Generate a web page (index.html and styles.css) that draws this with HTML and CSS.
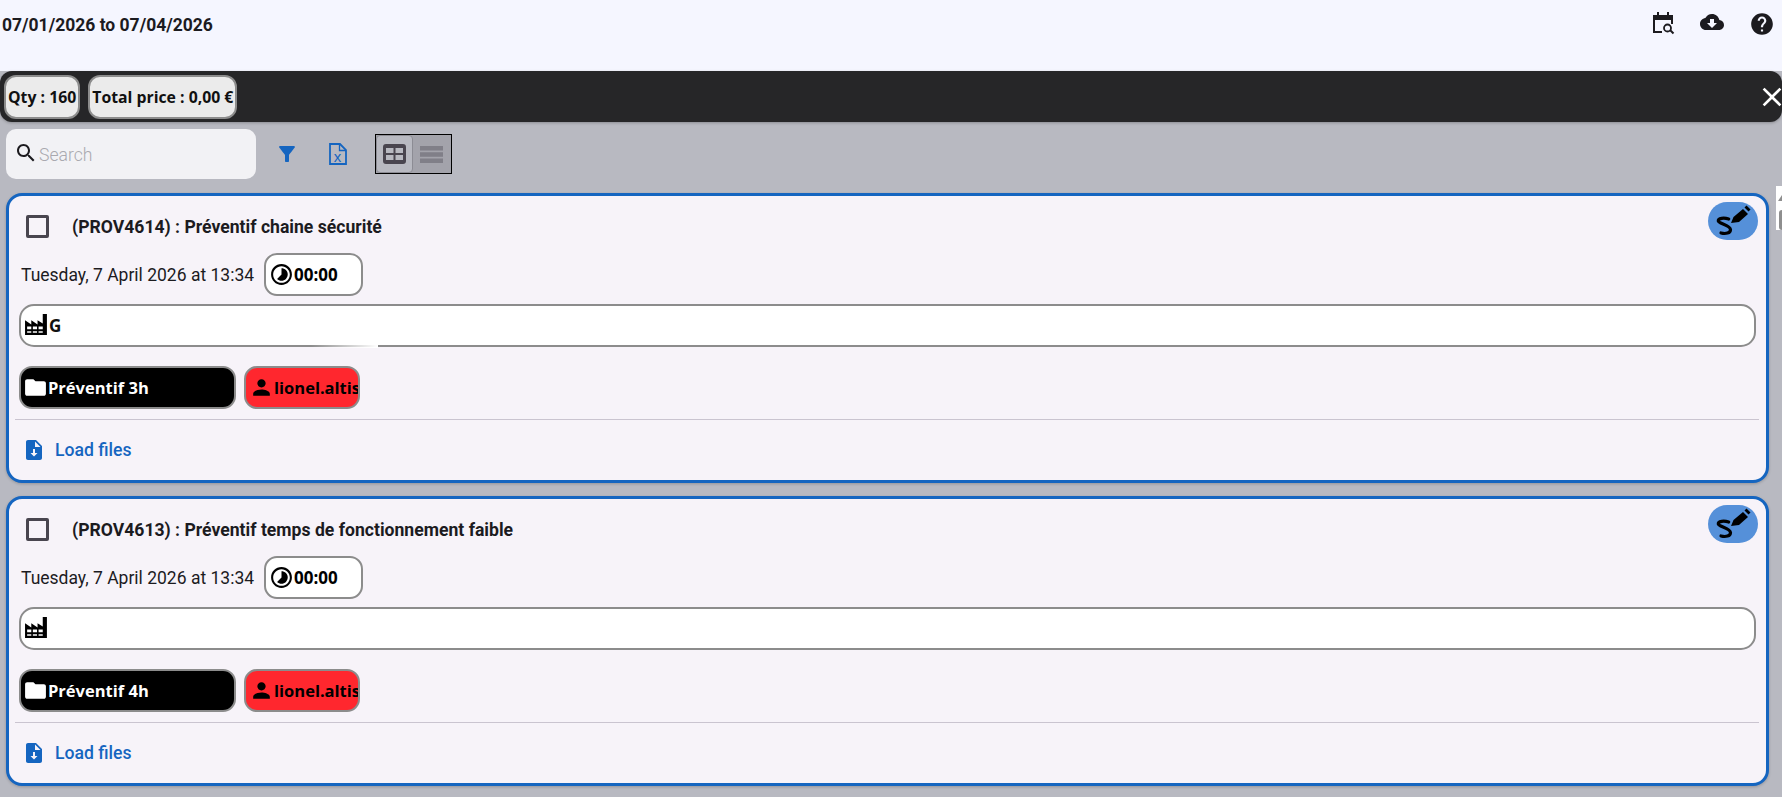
FILE: index.html
```html
<!DOCTYPE html>
<html>
    <head>
        <meta charset="UTF-8">
        <meta name="viewport" content="width=device-width, initial-scale=1.0">
        <title>Interventions</title>
        <link rel="stylesheet" href="styles.css">
    </head>
    <body>
        <svg class="sprite" width="0" height="0">
            <symbol id="i-search" viewBox="0 0 24 24"><path d="M15.5 14h-.79l-.28-.27C15.41 12.59 16 11.11 16 9.5 16 5.91 13.09 3 9.5 3S3 5.91 3 9.5 5.91 16 9.5 16c1.61 0 3.09-.59 4.23-1.57l.27.28v.79l5 4.99L20.49 19l-4.99-5zm-6 0C7.01 14 5 11.99 5 9.5S7.01 5 9.5 5 14 7.01 14 9.5 11.99 14 9.5 14z"/></symbol>
            <symbol id="i-filter" viewBox="0 0 24 24"><path d="M4.25 5.61C6.27 8.2 10 13 10 13v6c0 .55.45 1 1 1h2c.55 0 1-.45 1-1v-6s3.72-4.8 5.74-7.39c.51-.66.04-1.61-.79-1.61H5.04c-.83 0-1.3.95-.79 1.61z"/></symbol>
            <symbol id="i-folder" viewBox="0 0 24 24"><path d="M10 4H4c-1.1 0-1.99.9-1.99 2L2 18c0 1.1.9 2 2 2h16c1.1 0 2-.9 2-2V8c0-1.1-.9-2-2-2h-8l-2-2z"/></symbol>
            <symbol id="i-person" viewBox="0 0 24 24"><path d="M12 12c2.21 0 4-1.79 4-4s-1.79-4-4-4-4 1.79-4 4 1.79 4 4 4zm0 2c-2.67 0-8 1.34-8 4v2h16v-2c0-2.66-5.33-4-8-4z"/></symbol>
            <symbol id="i-timelapse" viewBox="0 0 24 24"><path d="M16.24 7.76C15.07 6.59 13.54 6 12 6v6l-4.24 4.24c2.34 2.34 6.14 2.34 8.49 0 2.34-2.34 2.34-6.14-.01-8.48zM12 2C6.48 2 2 6.48 2 12s4.48 10 10 10 10-4.48 10-10S17.52 2 12 2zm0 18c-4.42 0-8-3.58-8-8s3.58-8 8-8 8 3.58 8 8-3.58 8-8 8z"/></symbol>
            <symbol id="i-factory" viewBox="0 0 24 24"><path fill-rule="evenodd" d="M1 22V8l6 4V8l6 4V8l5 3V2h4v20zM3 14v2.500h4V14zm5.500 0v2.500h4V14zm5.500 0v2.500h4V14zM3 18.500V20h4v-1.500zm5.500 0V20h4v-1.500zm5.500 0V20h4v-1.500z"/></symbol>
            <symbol id="i-file-down" viewBox="0 0 24 24"><path d="M14 2H6c-1.1 0-1.99.9-1.99 2L4 20c0 1.1.89 2 1.99 2H18c1.1 0 2-.9 2-2V8l-6-6zm-1 7V3.500L18.500 9H13zm-2 2h2v4h2.500L12 18.500 8.500 15H11z"/></symbol>
            <symbol id="i-sign" viewBox="0 0 50 38"><path d="M23 21l2.500-6 9.500-8 5 5-9 8z"/><path d="M36.500 5.500l2-2 4 4-2 2z"/><path fill="none" stroke="#000" stroke-width="3.200" stroke-linecap="round" stroke-linejoin="round" d="M20.700 17C16 15.500 10 16 10.300 19c.3 2.500 12 4 12.200 8.500.1 3.800-5 4.600-9.500 3.500"/></symbol>
        </svg>

        <header class="topbar">
            <div class="period">07/01/2026 to 07/04/2026</div>
            <div class="topbar-icons">
                <svg class="cal-icon" viewBox="0 0 24 24"><path d="M6 1h2v3H6zM16 1h2v3h-2z"/><path d="M2 4h20v9h-2V9H4v11h7v2H2z"/><circle cx="16.500" cy="17" r="3.500" fill="none" stroke="currentColor" stroke-width="1.800"/><path d="M19 19l3.500 3.500" stroke="currentColor" stroke-width="2"/></svg>
                <svg class="cloud-icon" viewBox="0 0 24 24"><path d="M19.35 10.04C18.67 6.59 15.64 4 12 4 9.11 4 6.6 5.64 5.35 8.04 2.34 8.36 0 10.91 0 14c0 3.31 2.69 6 6 6h13c2.76 0 5-2.24 5-5 0-2.64-2.05-4.78-4.65-4.96zM17 13l-5 5-5-5h3V9h4v4h3z"/></svg>
                <svg class="help-icon" viewBox="0 0 24 24"><path d="M12 2C6.48 2 2 6.48 2 12s4.48 10 10 10 10-4.48 10-10S17.52 2 12 2zm1 17h-2v-2h2v2zm2.070-7.750l-.9.920C13.450 12.900 13 13.500 13 15h-2v-.5c0-1.100.45-2.100 1.170-2.830l1.240-1.260c.37-.36.59-.86.59-1.410 0-1.100-.9-2-2-2s-2 .9-2 2H8c0-2.210 1.790-4 4-4s4 1.790 4 4c0 .88-.36 1.680-.93 2.250z"/></svg>
            </div>
        </header>

        <div class="totals">
            <div class="total-chip">Qty : 160</div>
            <div class="total-chip">Total price : 0,00 €</div>
            <svg class="close-icon" viewBox="0 0 24 24"><path d="M19 6.410L17.590 5 12 10.590 6.410 5 5 6.410 10.590 12 5 17.590 6.410 19 12 13.410 17.590 19 19 17.590 13.410 12z"/></svg>
        </div>

        <main class="content">
            <div class="toolbar">
                <label class="search">
                    <svg class="search-icon"><use href="#i-search"/></svg>
                    <input type="text" placeholder="Search">
                </label>
                <svg class="filter-icon"><use href="#i-filter"/></svg>
                <svg class="xls-icon" viewBox="0 0 18 22">
                    <path d="M1 1h10l6 6v14H1z" fill="none" stroke="currentColor" stroke-width="1.800"/>
                    <path d="M10.500 1v6.500H17" fill="none" stroke="currentColor" stroke-width="1.300"/>
                    <text x="4.800" y="18.500" class="xls-letter">x</text>
                </svg>
                <div class="view-toggle">
                    <div class="view-btn active">
                        <svg viewBox="0 0 23 20"><path fill-rule="evenodd" d="M3 0h17a3 3 0 0 1 3 3v14a3 3 0 0 1-3 3H3a3 3 0 0 1-3-3V3a3 3 0 0 1 3-3zM3 4v5h7.500V4zm9.500 0v5H20V4zM3 11v5h7.500v-5zm9.500 0v5H20v-5z"/></svg>
                    </div>
                    <div class="view-btn">
                        <svg viewBox="0 0 23 17"><path d="M0 0h23v4.500H0zM0 6.250h23v4.500H0zM0 12.500h23V17H0z"/></svg>
                    </div>
                </div>
            </div>

            <div class="card-list">
                <article class="card">
                    <button class="sign-btn"><svg><use href="#i-sign"/></svg></button>
                    <div class="card-title">
                        <span class="checkbox"></span>
                        <span>(PROV4614) : Préventif chaine sécurité</span>
                    </div>
                    <div class="card-date">
                        <span>Tuesday, 7 April 2026 at 13:34</span>
                        <span class="duration"><svg><use href="#i-timelapse"/></svg>00:00</span>
                    </div>
                    <div class="site"><svg><use href="#i-factory"/></svg>G<span class="site-fade"></span></div>
                    <div class="tags">
                        <span class="tag tag-folder"><svg><use href="#i-folder"/></svg>Préventif 3h</span>
                        <span class="tag tag-user"><svg><use href="#i-person"/></svg>lionel.altis</span>
                    </div>
                    <div class="card-files">
                        <svg><use href="#i-file-down"/></svg>
                        <span>Load files</span>
                    </div>
                </article>

                <article class="card">
                    <button class="sign-btn"><svg><use href="#i-sign"/></svg></button>
                    <div class="card-title">
                        <span class="checkbox"></span>
                        <span>(PROV4613) : Préventif temps de fonctionnement faible</span>
                    </div>
                    <div class="card-date">
                        <span>Tuesday, 7 April 2026 at 13:34</span>
                        <span class="duration"><svg><use href="#i-timelapse"/></svg>00:00</span>
                    </div>
                    <div class="site"><svg><use href="#i-factory"/></svg></div>
                    <div class="tags">
                        <span class="tag tag-folder"><svg><use href="#i-folder"/></svg>Préventif 4h</span>
                        <span class="tag tag-user"><svg><use href="#i-person"/></svg>lionel.altis</span>
                    </div>
                    <div class="card-files">
                        <svg><use href="#i-file-down"/></svg>
                        <span>Load files</span>
                    </div>
                </article>
            </div>

            <div class="scroll-stub">
                <span class="scroll-arrow"></span>
                <span class="scroll-thumb"></span>
            </div>
        </main>
    </body>
</html>
```

FILE: styles.css
```css
html, body {
    margin: 0;
    height: 100%;
    overflow: hidden;
}
body {
    font-family: Roboto, sans-serif;
    color: #1c1b1f;
    background-color: #b8b9c1;
}
.sprite {
    position: absolute;
}
.topbar {
    display: flex;
    justify-content: space-between;
    height: 71px;
    background-color: #f5f6ff;
    box-sizing: border-box;
    padding: 15px 7px 0 2px;
}
.period {
    font-size: 17.5px;
    font-weight: 700;
    line-height: 21px;
    color: #1c1b1f;
}
.topbar-icons {
    display: flex;
    gap: 25px;
    align-items: flex-start;
    margin-top: -5px;
}
.topbar-icons svg {
    fill: #1c1b1f;
    color: #1c1b1f;
}
.cal-icon {
    width: 24px;
    height: 24px;
    margin-top: 1px;
}
.cloud-icon {
    width: 24px;
    height: 24px;
}
.help-icon {
    width: 26px;
    height: 26px;
    margin-top: 1px;
}
.totals {
    display: flex;
    align-items: center;
    gap: 8px;
    height: 51px;
    box-sizing: border-box;
    padding: 0 0 0 4px;
    background-color: #262628;
    border-radius: 12px;
    box-shadow: 0 1px 3px rgba(0, 0, 0, 0.25);
}
.total-chip {
    display: flex;
    align-items: center;
    height: 44px;
    box-sizing: border-box;
    padding: 0 2px;
    font-family: "Open Sans", sans-serif;
    font-size: 15.8px;
    font-weight: 700;
    color: #111;
    background-color: #ebebeb;
    border: 2px solid #8c8c8c;
    border-radius: 12px;
}
.close-icon {
    width: 32px;
    height: 32px;
    margin-left: auto;
    margin-right: -6px;
    fill: #fff;
}
.toolbar {
    display: flex;
    align-items: center;
    height: 64px;
    margin-bottom: 7px;
    box-sizing: border-box;
    padding-left: 6px;
}
.search {
    display: flex;
    align-items: center;
    gap: 1px;
    width: 250px;
    height: 50px;
    box-sizing: border-box;
    padding: 0 8px;
    background-color: #f2f2f5;
    border-radius: 10px;
}
.search-icon {
    width: 24px;
    height: 24px;
    fill: #1c1b1f;
    margin-top: -2px;
    flex-shrink: 0;
}
.search input {
    width: 100%;
    margin-top: 2px;
    border: none;
    outline: none;
    background: transparent;
    font-family: Roboto, sans-serif;
    font-size: 17.6px;
    font-weight: 300;
    padding: 0;
}
.search input::placeholder {
    color: #a9a9af;
    opacity: 1;
}
.filter-icon {
    width: 24px;
    height: 24px;
    margin-left: 19px;
    fill: #1565c0;
}
.xls-icon {
    width: 18px;
    height: 22px;
    margin-left: 30px;
    color: #1565c0;
}
.xls-letter {
    font-family: "Liberation Sans", sans-serif;
    font-size: 15px;
    fill: #1565c0;
}
.view-toggle {
    display: flex;
    width: 77px;
    height: 40px;
    box-sizing: border-box;
    margin-left: 28px;
    border: 1px solid #000;
    background-color: #a3a3ab;
}
.view-btn {
    display: flex;
    align-items: center;
    justify-content: center;
    width: 37px;
}
.view-btn.active {
    background-color: #b8b9c1;
    border: 1px solid #8c8c94;
    border-radius: 4px;
    box-sizing: border-box;
}
.view-btn svg {
    width: 23px;
    fill: #807f88;
}
.view-btn.active svg {
    fill: #49454f;
}
.card-list {
    display: flex;
    flex-direction: column;
    gap: 13px;
    width: 1763px;
    margin-left: 6px;
}
.card {
    position: relative;
    height: 290px;
    box-sizing: border-box;
    padding: 0 13px;
    background-color: #f7f3f9;
    border: 3px solid #1565c0;
    border-radius: 16px;
    box-shadow: 0 1px 3px rgba(0, 0, 0, 0.2);
}
.sign-btn {
    position: absolute;
    top: 6px;
    right: 8px;
    width: 50px;
    height: 38px;
    padding: 0;
    border: none;
    border-radius: 19px;
    background-color: #5590d9;
}
.sign-btn svg {
    display: block;
    width: 50px;
    height: 38px;
    fill: #000;
}
.card-title {
    display: flex;
    align-items: center;
    height: 43px;
    margin-top: 9px;
    margin-left: 4px;
    gap: 23px;
    font-size: 17.6px;
    font-weight: 700;
    color: #1c1b1f;
}
.checkbox {
    width: 23px;
    height: 23px;
    box-sizing: border-box;
    border: 3px solid #49454f;
    border-radius: 2px;
}
.card-date {
    display: flex;
    align-items: center;
    gap: 10px;
    height: 43px;
    margin: 5px 0 0 -1px;
    font-size: 17.5px;
    color: #1c1b1f;
}
.duration {
    display: flex;
    align-items: center;
    width: 99px;
    height: 43px;
    box-sizing: border-box;
    padding-left: 3px;
    font-family: "Open Sans", sans-serif;
    font-size: 17px;
    font-weight: 700;
    color: #000;
    background-color: #fff;
    border: 2px solid #8c8c8c;
    border-radius: 13px;
}
.duration svg {
    width: 25px;
    height: 25px;
}
.site {
    position: relative;
    display: flex;
    align-items: center;
    height: 43px;
    margin: 8px 0 0 -3px;
    width: 1737px;
    box-sizing: border-box;
    padding-left: 3px;
    font-family: "Open Sans", sans-serif;
    font-size: 17px;
    font-weight: 700;
    color: #111;
    background-color: #fff;
    border: 2px solid #8c8c8c;
    border-radius: 15px;
}
.site svg {
    width: 25px;
    height: 25px;
    margin-top: -3px;
}
.site-fade {
    position: absolute;
    left: 290px;
    bottom: -3px;
    width: 67px;
    height: 4px;
    background: linear-gradient(to right, rgba(255, 255, 255, 0), #fff);
}
.tags {
    display: flex;
    gap: 8px;
    margin: 19px 0 0 -3px;
}
.tag {
    display: flex;
    align-items: center;
    height: 43px;
    box-sizing: border-box;
    padding-left: 2px;
    font-family: "Open Sans", sans-serif;
    font-size: 16.5px;
    font-weight: 700;
    border: 2px solid #8c8c8c;
    border-radius: 13px;
    overflow: hidden;
}
.tag svg {
    width: 25px;
    height: 25px;
    flex-shrink: 0;
}
.tag-folder {
    width: 217px;
    background-color: #000;
    color: #fff;
    fill: #fff;
}
.tag-user {
    width: 116px;
    padding-left: 3px;
    background-color: #ff272e;
    color: #000;
    fill: #000;
    white-space: nowrap;
}
.card-files {
    display: flex;
    align-items: center;
    gap: 9px;
    height: 60px;
    margin: 10px -6px 0 -7px;
    padding-left: 7px;
    border-top: 1px solid #cac4d0;
    color: #1565c0;
    fill: #1565c0;
    font-size: 17.6px;
    font-weight: 500;
}
.card-files svg {
    width: 24px;
    height: 24px;
}
.scroll-stub {
    position: absolute;
    top: 186px;
    right: 0;
    display: flex;
    flex-direction: column;
    align-items: flex-end;
    width: 6px;
    height: 44px;
    background-color: #fff;
}
.scroll-arrow {
    width: 0;
    height: 0;
    margin-top: 9px;
    border-left: 4px solid transparent;
    border-bottom: 6px solid #8e8e8e;
}
.scroll-thumb {
    width: 3px;
    height: 20px;
    margin-top: 9px;
    background-color: #8e8e8e;
    border-radius: 3px 0 0 3px;
}
```
